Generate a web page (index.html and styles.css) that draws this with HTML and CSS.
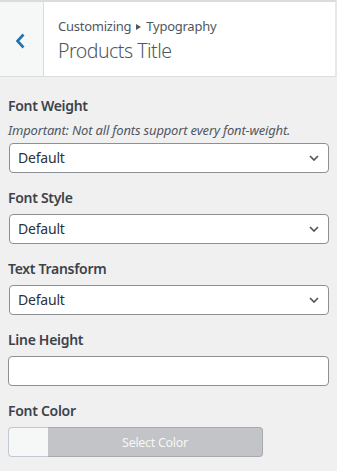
FILE: index.html
```html
<!DOCTYPE html>
<html lang="en">
<head>
<meta charset="utf-8">
<title>Products Title</title>
<link rel="stylesheet" href="styles.css">
</head>
<body>
<div class="panel">
  <div class="section-header">
    <button class="back" type="button" aria-label="Back">
      <svg width="12" height="16" viewBox="0 0 12 16"><polyline points="8.5,1.5 2.5,8 8.5,14.5" fill="none" stroke="#2271b1" stroke-width="2.6" stroke-linecap="butt" stroke-linejoin="miter"/></svg>
    </button>
    <div class="title-wrap">
      <div class="crumb">Customizing <svg class="sep" width="5" height="6" viewBox="0 0 5 6"><polygon points="0,0 5,3 0,6" fill="#50575e"/></svg> Typography</div>
      <h3 class="title">Products Title</h3>
    </div>
  </div>

  <div class="controls">
    <div class="control">
      <label class="control-title">Font Weight</label>
      <div class="description">Important: Not all fonts support every font-weight.</div>
      <div class="select-wrap">
        <select class="select"><option>Default</option></select>
        <svg class="caret" width="10" height="6" viewBox="0 0 10 6"><polyline points="1,1 5,5 9,1" fill="none" stroke="#50575e" stroke-width="1.7"/></svg>
      </div>
    </div>

    <div class="control">
      <label class="control-title">Font Style</label>
      <div class="select-wrap">
        <select class="select"><option>Default</option></select>
        <svg class="caret" width="10" height="6" viewBox="0 0 10 6"><polyline points="1,1 5,5 9,1" fill="none" stroke="#50575e" stroke-width="1.7"/></svg>
      </div>
    </div>

    <div class="control">
      <label class="control-title">Text Transform</label>
      <div class="select-wrap">
        <select class="select"><option>Default</option></select>
        <svg class="caret" width="10" height="6" viewBox="0 0 10 6"><polyline points="1,1 5,5 9,1" fill="none" stroke="#50575e" stroke-width="1.7"/></svg>
      </div>
    </div>

    <div class="control">
      <label class="control-title">Line Height</label>
      <input class="text-input" type="text">
    </div>

    <div class="control">
      <label class="control-title">Font Color</label>
      <div class="color-button">
        <span class="swatch"></span>
        <span class="color-text">Select Color</span>
      </div>
    </div>
  </div>
</div>
</body>
</html>
```

FILE: styles.css
```css
* { box-sizing: border-box; }

html, body {
  margin: 0;
  padding: 0;
  background: #f0f0f1;
}

body {
  font-family: "Noto Sans", "Open Sans", sans-serif;
  color: #3c434a;
  font-size: 13px;
}

.panel {
  width: 337px;
  min-height: 471px;
  background: #f0f0f1;
}

.section-header {
  display: flex;
  background: #fff;
  border-top: 2px solid #dcdcde;
  border-bottom: 1px solid #dcdcde;
  border-right: 2px solid #e8e8e9;
  height: 77px;
}

.back {
  width: 44px;
  flex: 0 0 44px;
  background: #f6f7f7;
  border: 0;
  border-right: 1px solid #dcdcde;
  padding: 0 0 0 2px;
  margin: 0;
  display: flex;
  align-items: center;
  justify-content: center;
  cursor: pointer;
}

.back svg { display: block; margin-left: -4px; margin-top: 3px; }

.title-wrap {
  padding: 14px 10px 0 14px;
}

.crumb {
  font-size: 13px;
  line-height: 20px;
  color: #50575e;
  letter-spacing: -0.25px;
  display: flex;
  align-items: center;
  gap: 5px;
}

.sep { display: block; margin-top: 1px; }

.title {
  margin: 1px 0 0;
  font-size: 19.5px;
  font-weight: 300;
  line-height: 27px;
  color: #50575e;
  letter-spacing: -0.5px;
}

.controls {
  padding: 16px 8px 0 8px;
}

.control {
  margin-bottom: 12px;
}

.control-title {
  display: block;
  font-size: 14px;
  font-weight: 600;
  line-height: 25px;
  margin-bottom: 4px;
  color: #3c434a;
  letter-spacing: -0.3px;
}

.description {
  font-size: 13px;
  font-style: italic;
  line-height: 18px;
  color: #50575e;
  margin-top: -1px;
  margin-bottom: 4px;
  letter-spacing: -0.17px;
}

.select-wrap {
  position: relative;
  margin-left: 1px;
}

.select {
  -webkit-appearance: none;
  appearance: none;
  display: block;
  width: 100%;
  height: 30px;
  margin: 0;
  padding: 0 24px 0 8px;
  border: 1px solid #8c8f94;
  border-radius: 4px;
  background: #fff;
  font-family: inherit;
  font-size: 14px;
  line-height: 28px;
  color: #2c3338;
  letter-spacing: -0.2px;
}

.caret {
  position: absolute;
  right: 10px;
  top: 12px;
  pointer-events: none;
}

.text-input {
  display: block;
  width: 100%;
  height: 30px;
  margin: 0;
  padding: 0 8px;
  border: 1px solid #8c8f94;
  border-radius: 4px;
  background: #fff;
  font-family: inherit;
  font-size: 14px;
}

.color-button {
  display: flex;
  width: 255px;
  height: 30px;
}

.swatch {
  flex: 0 0 40px;
  background: #f6f7f7;
  border: 1px solid #c3c8d4;
  border-right: 0;
  border-radius: 4px 0 0 4px;
}

.color-text {
  flex: 1;
  display: flex;
  align-items: center;
  justify-content: center;
  background: #c3c4c7;
  border: 1px solid #a7aaad;
  border-left: 0;
  border-radius: 0 4px 4px 0;
  color: #f6f7f7;
  font-size: 12.5px;
  letter-spacing: -0.3px;
}
```
